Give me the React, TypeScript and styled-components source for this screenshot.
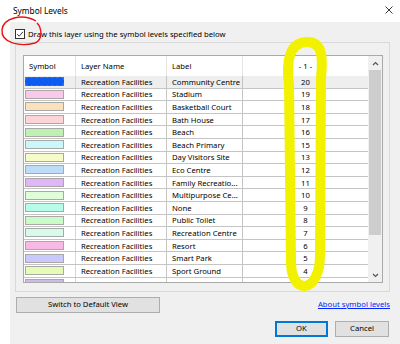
import React from "react";
import styled, { createGlobalStyle } from "styled-components";

type Row = {
  color: string;
  label: string;
  level: number;
  selected?: boolean;
  partial?: boolean;
};

const rows: Row[] = [
  { color: "#0d5cf2", label: "Community Centre", level: 20, selected: true },
  { color: "#f9c9e9", label: "Stadium", level: 19 },
  { color: "#fbe1bb", label: "Basketball Court", level: 18 },
  { color: "#fcd5d9", label: "Bath House", level: 17 },
  { color: "#bff2b2", label: "Beach", level: 16 },
  { color: "#c9f8fb", label: "Beach Primary", level: 15 },
  { color: "#f5fcc9", label: "Day Visitors Site", level: 13 },
  { color: "#bedcf8", label: "Eco Centre", level: 12 },
  { color: "#e1b6f8", label: "Family Recreatio...", level: 11 },
  { color: "#e1fcd8", label: "Multipurpose Ce...", level: 10 },
  { color: "#b6fce9", label: "None", level: 9 },
  { color: "#c9fcc6", label: "Public Toilet", level: 8 },
  { color: "#d6fce9", label: "Recreation Centre", level: 7 },
  { color: "#f8b9e4", label: "Resort", level: 6 },
  { color: "#c9c9fc", label: "Smart Park", level: 5 },
  { color: "#e5fcb6", label: "Sport Ground", level: 4 },
  { color: "#cdbbea", label: "", level: 3, partial: true },
];

const GlobalStyle = createGlobalStyle`
  html, body {
    margin: 0;
    padding: 0;
    background: #fff;
  }
  body {
    font-family: "Noto Sans", "Open Sans", sans-serif;
    font-size: 7.7px;
    color: #000;
  }
`;

const Window = styled.div`
  position: relative;
  width: 400px;
  height: 344px;
  background: #fff;
  display: flex;
  flex-direction: column;
  overflow: hidden;
`;

const TitleBar = styled.div`
  height: 22px;
  flex: none;
  display: flex;
  align-items: center;
  justify-content: space-between;
  padding: 0 7px 2px 13px;
  box-sizing: border-box;
  font-size: 8.3px;
`;

const DialogBody = styled.div`
  flex: 1;
  margin-left: 10px;
  background: #f0f0f0;
  padding: 7px 10px 0 5px;
  display: flex;
  flex-direction: column;
`;

const CheckRow = styled.label`
  display: flex;
  align-items: center;
  gap: 3px;
  height: 10px;
`;

const CheckBox = styled.span`
  width: 10px;
  height: 10px;
  box-sizing: border-box;
  border: 1px solid #333;
  background: #fff;
  display: flex;
  align-items: center;
  justify-content: center;
`;

const GroupBox = styled.div`
  margin-top: 3px;
  border: 1px solid #d9d9d9;
  height: 250px;
  box-sizing: border-box;
  padding: 12px 6px 8px 7px;
`;

const ListBox = styled.div`
  height: 228px;
  border: 1px solid #a9a9a9;
  background: #fff;
  display: flex;
  box-sizing: border-box;
`;

const Table = styled.div`
  flex: 1;
  overflow: hidden;
`;

const columns = "52px 91px 76px 1fr";

const HeaderRow = styled.div`
  display: grid;
  grid-template-columns: ${columns};
  height: 20px;
`;

const HeaderCell = styled.div<{ $center?: boolean }>`
  display: flex;
  align-items: center;
  justify-content: ${(p) => (p.$center ? "center" : "flex-start")};
  padding-left: ${(p) => (p.$center ? "0" : "5px")};
  border-right: 1px solid #e5e5e5;
  &:last-child {
    border-right: none;
  }
`;

const BodyRow = styled.div<{ $selected?: boolean }>`
  display: grid;
  grid-template-columns: ${columns};
  height: 12.6px;
  box-sizing: border-box;
  border-bottom: 1px solid #c4c4c4;
  background: ${(p) => (p.$selected ? "#eeeeee" : "#fff")};
`;

const Cell = styled.div<{ $center?: boolean }>`
  display: flex;
  align-items: center;
  justify-content: ${(p) => (p.$center ? "center" : "flex-start")};
  padding-left: ${(p) => (p.$center ? "0" : "5px")};
  border-right: 1px solid #c4c4c4;
  white-space: nowrap;
  overflow: hidden;
  &:last-child {
    border-right: none;
  }
`;

const SwatchCell = styled.div`
  display: flex;
  align-items: center;
  padding-left: 1px;
  border-right: 1px solid #d6d6d6;
`;

const Swatch = styled.span<{ $color: string; $selected?: boolean }>`
  width: 39px;
  height: 9px;
  box-sizing: border-box;
  background: ${(p) => p.$color};
  border: 1px ${(p) => (p.$selected ? "dashed #e8345a" : "solid #a8a8a8")};
`;

const ScrollBar = styled.div`
  width: 14px;
  flex: none;
  background: #f0f0f0;
  display: flex;
  flex-direction: column;
  align-items: center;
`;

const ArrowBox = styled.div`
  height: 14px;
  width: 100%;
  display: flex;
  align-items: center;
  justify-content: center;
`;

const Thumb = styled.div`
  width: 12px;
  height: 165px;
  background: #cdcdcd;
`;

const Spacer = styled.div`
  flex: 1;
`;

const LinkRow = styled.div`
  margin-top: 5px;
  display: flex;
  align-items: center;
  justify-content: space-between;
  padding-left: 1px;
`;

const Button = styled.button<{ $width: number; $focused?: boolean }>`
  width: ${(p) => p.$width}px;
  height: 16px;
  padding: 0;
  margin: 0;
  background: #e1e1e1;
  border: 1px solid ${(p) => (p.$focused ? "#0078d7" : "#adadad")};
  box-shadow: ${(p) => (p.$focused ? "inset 0 0 0 1px #0078d7" : "none")};
  font-family: inherit;
  font-size: 7.7px;
  color: #000;
  line-height: 1;
`;

const Link = styled.a`
  color: #0026ff;
  text-decoration: underline;
  margin-top: -3px;
`;

const ButtonRow = styled.div`
  margin-top: 8px;
  display: flex;
  justify-content: flex-end;
  gap: 7px;
  padding-right: 1px;
`;

const Annotations = styled.svg`
  position: absolute;
  left: 0;
  top: 0;
  pointer-events: none;
`;

const Chevron = ({ up }: { up?: boolean }) => (
  <svg width="7" height="5" viewBox="0 0 7 5">
    <path
      d={up ? "M1 4 L3.5 1.5 L6 4" : "M1 1 L3.5 3.5 L6 1"}
      fill="none"
      stroke="#555"
      strokeWidth="1.2"
    />
  </svg>
);

export default function App() {
  return (
    <>
      <GlobalStyle />
      <Window>
        <TitleBar>
          <span>Symbol Levels</span>
          <svg width="8" height="8" viewBox="0 0 8 8">
            <path d="M0.5 0.5 L7.5 7.5 M7.5 0.5 L0.5 7.5" stroke="#222" strokeWidth="0.9" />
          </svg>
        </TitleBar>
        <DialogBody>
          <CheckRow>
            <CheckBox>
              <svg width="8" height="8" viewBox="0 0 8 8">
                <path d="M1.2 4.2 L3.2 6.2 L7 1.8" fill="none" stroke="#333" strokeWidth="1" />
              </svg>
            </CheckBox>
            <span>Draw this layer using the symbol levels specified below</span>
          </CheckRow>
          <GroupBox>
            <ListBox>
              <Table>
                <HeaderRow>
                  <HeaderCell>Symbol</HeaderCell>
                  <HeaderCell>Layer Name</HeaderCell>
                  <HeaderCell>Label</HeaderCell>
                  <HeaderCell $center>- 1 -</HeaderCell>
                </HeaderRow>
                {rows.map((r) => (
                  <BodyRow key={r.level} $selected={r.selected}>
                    <SwatchCell>
                      <Swatch $color={r.color} $selected={r.selected} />
                    </SwatchCell>
                    <Cell>{r.partial ? "" : "Recreation Facilities"}</Cell>
                    <Cell>{r.label}</Cell>
                    <Cell $center>{r.partial ? "" : r.level}</Cell>
                  </BodyRow>
                ))}
              </Table>
              <ScrollBar>
                <ArrowBox>
                  <Chevron up />
                </ArrowBox>
                <Thumb />
                <Spacer />
                <ArrowBox>
                  <Chevron />
                </ArrowBox>
              </ScrollBar>
            </ListBox>
          </GroupBox>
          <LinkRow>
            <Button $width={144}>Switch to Default View</Button>
            <Link>About symbol levels</Link>
          </LinkRow>
          <ButtonRow>
            <Button $width={53} $focused>
              OK
            </Button>
            <Button $width={54}>Cancel</Button>
          </ButtonRow>
        </DialogBody>
        <Annotations width="400" height="344" viewBox="0 0 400 344">
          <path
            d="M36 21 C22 13 3 18 2 30 C1 43 20 47 35 43 C43 40 42 28 37 23"
            fill="none"
            stroke="#e11"
            strokeWidth="1.4"
          />
          <path
            d="M289 85 C286 62 289 43 306 42 C323 41 323 58 321 78 L320 255 C320 294 291 296 291 262 Z"
            fill="none"
            stroke="#f2f200"
            strokeWidth="10"
            strokeLinejoin="round"
          />
        </Annotations>
      </Window>
    </>
  );
}
